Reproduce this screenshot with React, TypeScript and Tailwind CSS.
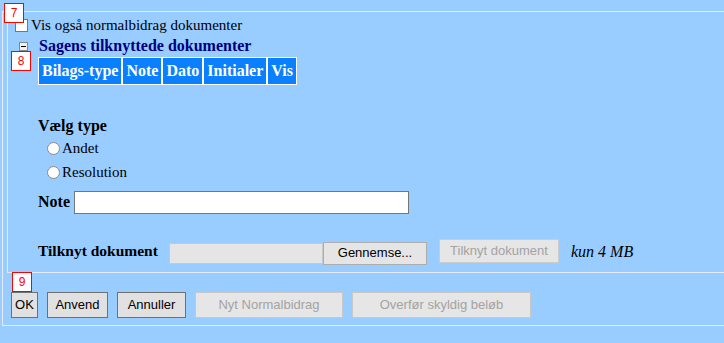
const columns = ["Bilags-type", "Note", "Dato", "Initialer", "Vis"];

const sans = "font-[Liberation_Sans,Arial,sans-serif]";

function Marker({ n, className }: { n: string; className: string }) {
  return (
    <div
      className={`absolute w-[20px] h-[20px] bg-white border border-[#ff0000] text-[#ff0000] text-[12px] leading-[18px] text-center font-[Liberation_Sans,Arial,sans-serif] ${className}`}
    >
      {n}
    </div>
  );
}

function Btn({ label, disabled, className = "" }: { label: string; disabled?: boolean; className?: string }) {
  return (
    <button
      className={
        disabled
          ? `h-[26px] border border-[#c8c8c8] bg-[#e6e6e6] text-[#a3a3a3] text-[13px] font-[Liberation_Sans,Arial,sans-serif] ${className}`
          : `h-[26px] border border-[#707070] bg-[#e1e1e1] text-black text-[13px] font-[Liberation_Sans,Arial,sans-serif] ${className}`
      }
    >
      {label}
    </button>
  );
}

function Radio({ label }: { label: string }) {
  return (
    <div className="flex items-center h-[24px] pl-[8px] text-[15px]">
      <span className="w-[13px] h-[13px] rounded-full border border-[#8a8a8a] bg-white mr-[2px]" />
      <span>{label}</span>
    </div>
  );
}

export default function App() {
  return (
    <div className="relative w-[724px] h-[343px] overflow-hidden bg-[#99ccff] font-[Liberation_Serif,Times_New_Roman,serif] text-[16px] text-black">
      <div className="ml-[2px] mt-[11px] h-[315px] border-t border-l border-b border-[#e4edf7]">
        <div className="ml-[4px] h-[258px] border-l border-b border-[#e4edf7] pl-[6px]">
          {/* vis ogsaa */}
          <div className="flex items-center h-[20px] mt-[3px]">
            <span className="w-[13px] h-[13px] border border-[#777] bg-white ml-[1px] mr-[3px]" />
            <span className="leading-[20px] text-[15px]">Vis også normalbidrag dokumenter</span>
          </div>

          {/* sagens dokumenter */}
          <div className="flex items-center h-[20px] mt-[1px]">
            <span className="w-[9px] h-[9px] border border-[#888] bg-[#f0f0f0] ml-[5px] mr-[11px] flex items-center justify-center">
              <span className="w-[5px] h-[1px] bg-black" />
            </span>
            <span className="font-bold text-[#000080]">Sagens tilknyttede dokumenter</span>
          </div>

          <div className="ml-[24px] mt-[1px] inline-flex bg-white p-[1px] gap-[2px]">
            {columns.map((c) => (
              <div key={c} className="bg-[#0a80ff] text-white font-bold px-[3px] h-[26px] leading-[26px]">
                {c}
              </div>
            ))}
          </div>

          <div className="ml-[24px] mt-[31px] font-bold leading-[20px]">Vælg type</div>
          <div className="ml-[25px] mt-[0px]">
            <Radio label="Andet" />
            <Radio label="Resolution" />
          </div>

          <div className="ml-[24px] mt-[6px] flex items-center h-[24px]">
            <span className="font-bold mr-[4px]">Note</span>
            <span className="w-[335px] h-[23px] border border-[#767676] bg-white" />
          </div>

          <div className="ml-[24px] mt-[24px] flex items-center h-[26px]">
            <span className="font-bold text-[15.5px] w-[131px]">Tilknyt dokument</span>
            <span className="w-[154px] h-[21px] mt-[4px] border border-[#c9c9c9] bg-[#e5e5e5]" />
            <span className={`w-[104px] h-[23px] mt-[4px] border border-[#adadad] bg-[#e5e5e5] text-[13px] ${sans} flex items-center justify-center`}>
              Gennemse...
            </span>
            <span className={`ml-[12px] w-[120px] h-[24px] border border-[#cccccc] bg-[#e6e6e6] text-[#a3a3a3] text-[13px] ${sans} flex items-center justify-center`}>
              Tilknyt dokument
            </span>
            <span className="ml-[12px] italic mt-[2px]">kun 4 MB</span>
          </div>
        </div>

        <div className="flex gap-[9px] ml-[8px] mt-[19px]">
          <Btn label="OK" className="w-[27px]" />
          <Btn label="Anvend" className="w-[61px]" />
          <Btn label="Annuller" className="w-[69px]" />
          <Btn label="Nyt Normalbidrag" disabled className="w-[148px]" />
          <Btn label="Overfør skyldig beløb" disabled className="w-[179px]" />
        </div>
      </div>

      <Marker n="7" className="left-[4px] top-[3px]" />
      <Marker n="8" className="left-[11px] top-[51px]" />
      <Marker n="9" className="left-[12px] top-[272px]" />
    </div>
  );
}
